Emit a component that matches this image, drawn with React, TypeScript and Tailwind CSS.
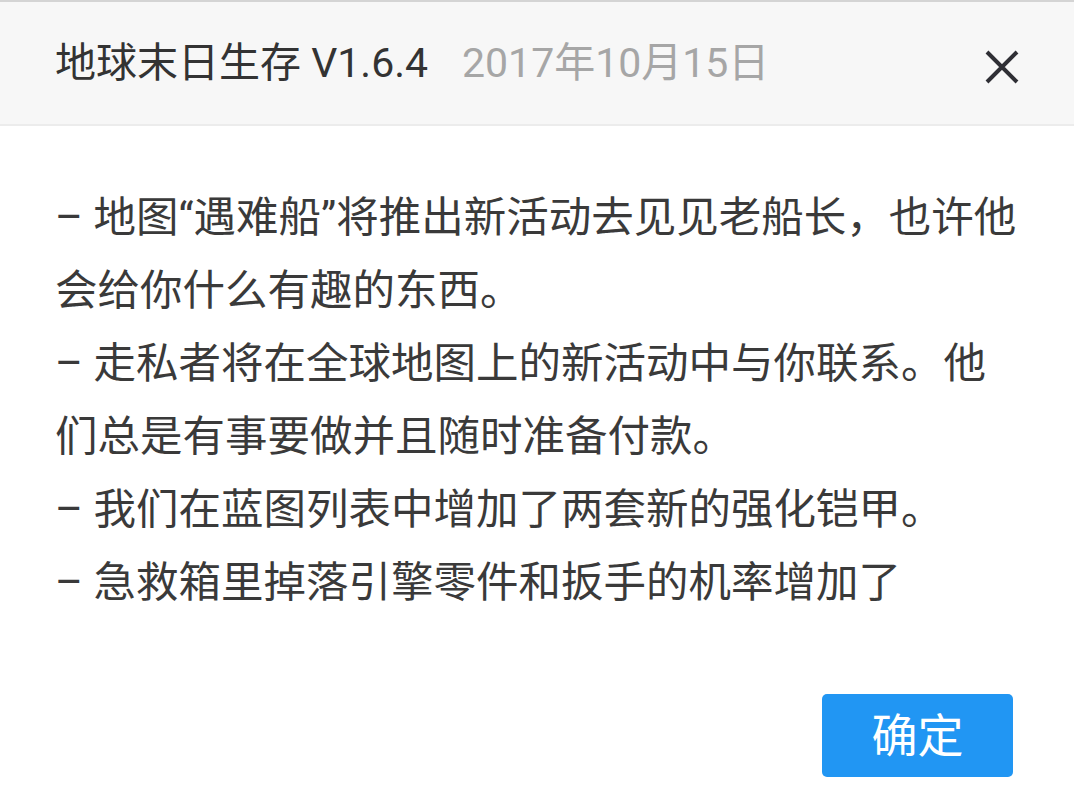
export default function App() {
  const lines = [
    "– 地图“遇难船”将推出新活动去见见老船长，也许他会给你什么有趣的东西。",
    "– 走私者将在全球地图上的新活动中与你联系。他们总是有事要做并且随时准备付款。",
    "– 我们在蓝图列表中增加了两套新的强化铠甲。",
    "– 急救箱里掉落引擎零件和扳手的机率增加了",
  ];

  return (
    <div className="w-[1074px] h-[802px] bg-white flex flex-col overflow-hidden font-['Roboto','Noto_Sans_CJK_SC',sans-serif]">
      {/* Header */}
      <div className="h-[126px] shrink-0 bg-[#f7f7f7] border-t-2 border-t-[#d4d4d4] border-b-2 border-b-[#ececec] flex items-center pl-[55px] pr-[54px]">
        <span className="text-[41px] text-[#333333] leading-none">地球末日生存 V1.6.4</span>
        <span className="ml-[34px] text-[41px] text-[#a6a6a6] leading-none">2017年10月15日</span>
        <button className="ml-auto w-[36px] h-[36px] flex items-center justify-center mt-[8px]">
          <svg width="36" height="36" viewBox="0 0 36 36" fill="none" stroke="#2f2f35" strokeWidth="4" strokeLinecap="butt">
            <path d="M3 3 L33 33 M33 3 L3 33" />
          </svg>
        </button>
      </div>

      {/* Body */}
      <div className="flex-1 flex flex-col px-[55px] pt-[55px]">
        <div className="text-[42.5px] leading-[73px] text-[#3a3a3a]">
          {lines.map((l, i) => (
            <p key={i}>{l}</p>
          ))}
        </div>
        <div className="flex justify-end mt-[75px] pr-[6px]">
          <button className="w-[191px] h-[83px] rounded-[5px] bg-[#2196f3] text-white text-[46px] leading-none flex items-center justify-center">
            确定
          </button>
        </div>
      </div>
    </div>
  );
}
